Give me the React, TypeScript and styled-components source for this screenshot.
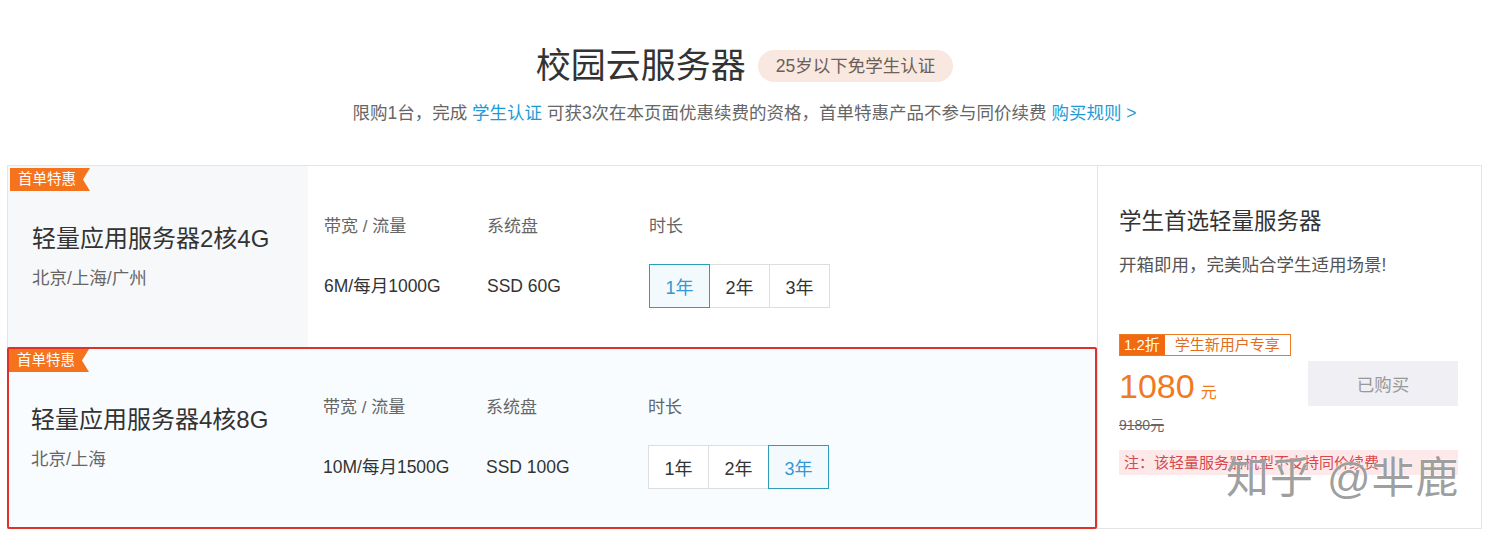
import React, { useState } from 'react';
import styled, { createGlobalStyle } from 'styled-components';

const GlobalStyle = createGlobalStyle`
  body {
    margin: 0;
    background: #fff;
    font-family: "Liberation Sans", "Noto Sans CJK SC", sans-serif;
    color: #333;
  }
`;

const Page = styled.div`
  width: 1475px;
  margin-left: 7px;
`;

const Header = styled.div`
  display: flex;
  flex-direction: column;
  align-items: center;
  padding-top: 42px;
  margin-bottom: 40px;
`;

const TitleRow = styled.div`
  display: flex;
  align-items: center;
`;

const Title = styled.h1`
  margin: 0;
  font-size: 35px;
  line-height: 48px;
  font-weight: 400;
  color: #333;
`;

const AgeBadge = styled.span`
  margin-left: 12px;
  height: 32px;
  line-height: 32px;
  padding: 0 18px;
  border-radius: 16px;
  background: #f8e8df;
  color: #6d5f57;
  font-size: 17.5px;
`;

const Notice = styled.p`
  margin: 11px 0 0;
  font-size: 17.5px;
  line-height: 24px;
  color: #666;
`;

const Link = styled.a`
  color: #1e9bd7;
  text-decoration: none;
  cursor: pointer;
`;

const Board = styled.div`
  display: grid;
  grid-template-columns: 1089px 1fr;
  border: 1px solid #e4e4e4;
`;

const Plans = styled.div`
  display: flex;
  flex-direction: column;
`;

const PlanRow = styled.div<{ $active?: boolean }>`
  position: relative;
  display: grid;
  grid-template-columns: 298px 163px 162px 1fr;
  height: ${p => (p.$active ? '178px' : '177px')};
  border: 2px solid ${p => (p.$active ? '#dd3129' : 'transparent')};
  margin: ${p => (p.$active ? '0 0 -1px -1px' : '0')};
  background: ${p => (p.$active ? '#f8fcff' : '#fff')};
  border-radius: ${p => (p.$active ? '2px' : '0')};
`;

const FirstTag = styled.span`
  position: absolute;
  top: 0;
  left: 0;
  width: 80px;
  height: 23px;
  line-height: 23px;
  padding-left: 8px;
  box-sizing: border-box;
  background: #f5731c;
  color: #fff;
  font-size: 14.5px;
  clip-path: polygon(0 0, 100% 0, calc(100% - 7px) 50%, 100% 100%, 0 100%);
`;

const NameCell = styled.div<{ $active?: boolean }>`
  display: flex;
  flex-direction: column;
  justify-content: center;
  padding-left: 24px;
  margin: -2px 0 -2px -2px;
  background: ${p => (p.$active ? 'transparent' : '#f7f8fa')};
`;

const PlanName = styled.div`
  font-size: 24px;
  line-height: 30px;
  color: #333;
`;

const Region = styled.div`
  margin-top: 12px;
  font-size: 17.5px;
  line-height: 24px;
  color: #666;
`;

const SpecCell = styled.div`
  display: flex;
  flex-direction: column;
  padding: 47px 0 0 16px;
`;

const SpecLabel = styled.div`
  font-size: 17px;
  line-height: 24px;
  color: #666;
`;

const SpecValue = styled.div`
  margin-top: 35px;
  font-size: 17.5px;
  line-height: 24px;
  color: #333;
`;

const Durations = styled.div`
  display: flex;
  margin-top: 25px;
`;

const DurationButton = styled.button<{ $selected?: boolean }>`
  width: 61px;
  height: 44px;
  margin-left: -1px;
  padding: 0;
  font-family: inherit;
  font-size: 18px;
  cursor: pointer;
  position: relative;
  z-index: ${p => (p.$selected ? 1 : 0)};
  border: 1px solid ${p => (p.$selected ? '#2d9dba' : '#dedede')};
  background: ${p => (p.$selected ? '#f2fafe' : '#fff')};
  color: ${p => (p.$selected ? '#3597d3' : '#333')};
  &:first-child {
    margin-left: 0;
  }
`;

const Panel = styled.div`
  position: relative;
  border-left: 1px solid #e4e4e4;
  padding: 41px 23px 0 21px;
`;

const PanelTitle = styled.div`
  font-size: 22.5px;
  line-height: 30px;
  color: #333;
`;

const PanelDesc = styled.div`
  margin-top: 16px;
  font-size: 17.5px;
  line-height: 24px;
  color: #555;
`;

const PriceArea = styled.div`
  display: flex;
  justify-content: space-between;
  margin-top: 57px;
`;

const PriceBlock = styled.div`
  display: flex;
  flex-direction: column;
`;

const Discount = styled.div`
  display: flex;
  height: 22px;
  border: 1px solid #f07a22;
  box-sizing: border-box;
  width: 172px;
  font-size: 15px;
  line-height: 20px;
`;

const DiscountRate = styled.span`
  background: #f26a10;
  color: #fff;
  padding: 0 5px 0 4px;
`;

const DiscountText = styled.span`
  color: #e26c1e;
  padding-left: 10px;
`;

const Price = styled.div`
  margin-top: 10px;
  color: #f07a1f;
  font-size: 34px;
  line-height: 40px;
`;

const Unit = styled.span`
  font-size: 16px;
  margin-left: 6px;
`;

const OldPrice = styled.div`
  margin-top: 2px;
  font-size: 14px;
  line-height: 20px;
  color: #666;
  text-decoration: line-through;
`;

const BuyButton = styled.button`
  margin-top: 27px;
  width: 150px;
  height: 45px;
  border: none;
  background: #efeff4;
  color: #999;
  font-family: inherit;
  font-size: 17.5px;
  cursor: not-allowed;
`;

const Note = styled.div`
  margin-top: 15px;
  height: 25px;
  line-height: 25px;
  padding-left: 5px;
  background: #fde9ea;
  color: #d8484b;
  font-size: 15px;
`;

const Watermark = styled.div`
  position: absolute;
  left: 128px;
  top: 288px;
  font-size: 43px;
  line-height: 48px;
  color: rgba(110, 110, 110, 0.68);
  text-shadow: 0 0 2px #fff, 0 0 1px #fff;
  pointer-events: none;
  letter-spacing: 1px;
`;

type Plan = {
  name: string;
  region: string;
  bandwidth: string;
  disk: string;
  year: number;
};

const plans: Plan[] = [
  { name: '轻量应用服务器2核4G', region: '北京/上海/广州', bandwidth: '6M/每月1000G', disk: 'SSD 60G', year: 1 },
  { name: '轻量应用服务器4核8G', region: '北京/上海', bandwidth: '10M/每月1500G', disk: 'SSD 100G', year: 3 },
];

const App = () => {
  const [years, setYears] = useState(plans.map(p => p.year));
  const active = 1;

  return (
    <Page>
      <GlobalStyle />
      <Header>
        <TitleRow>
          <Title>校园云服务器</Title>
          <AgeBadge>25岁以下免学生认证</AgeBadge>
        </TitleRow>
        <Notice>
          限购1台，完成 <Link>学生认证</Link> 可获3次在本页面优惠续费的资格，首单特惠产品不参与同价续费 <Link>购买规则 &gt;</Link>
        </Notice>
      </Header>

      <Board>
        <Plans>
          {plans.map((plan, i) => (
            <PlanRow key={plan.name} $active={i === active}>
              <NameCell $active={i === active}>
                <PlanName>{plan.name}</PlanName>
                <Region>{plan.region}</Region>
              </NameCell>
              <FirstTag>首单特惠</FirstTag>
              <SpecCell>
                <SpecLabel>带宽 / 流量</SpecLabel>
                <SpecValue>{plan.bandwidth}</SpecValue>
              </SpecCell>
              <SpecCell>
                <SpecLabel>系统盘</SpecLabel>
                <SpecValue>{plan.disk}</SpecValue>
              </SpecCell>
              <SpecCell>
                <SpecLabel>时长</SpecLabel>
                <Durations>
                  {[1, 2, 3].map(y => (
                    <DurationButton
                      key={y}
                      $selected={years[i] === y}
                      onClick={() => setYears(prev => prev.map((v, j) => (j === i ? y : v)))}
                    >
                      {y}年
                    </DurationButton>
                  ))}
                </Durations>
              </SpecCell>
            </PlanRow>
          ))}
        </Plans>

        <Panel>
          <PanelTitle>学生首选轻量服务器</PanelTitle>
          <PanelDesc>开箱即用，完美贴合学生适用场景!</PanelDesc>
          <PriceArea>
            <PriceBlock>
              <Discount>
                <DiscountRate>1.2折</DiscountRate>
                <DiscountText>学生新用户专享</DiscountText>
              </Discount>
              <Price>
                1080<Unit>元</Unit>
              </Price>
              <OldPrice>9180元</OldPrice>
            </PriceBlock>
            <BuyButton disabled>已购买</BuyButton>
          </PriceArea>
          <Note>注：该轻量服务器机型不支持同价续费</Note>
          <Watermark>知乎 @芈鹿</Watermark>
        </Panel>
      </Board>
    </Page>
  );
};

export default App;
